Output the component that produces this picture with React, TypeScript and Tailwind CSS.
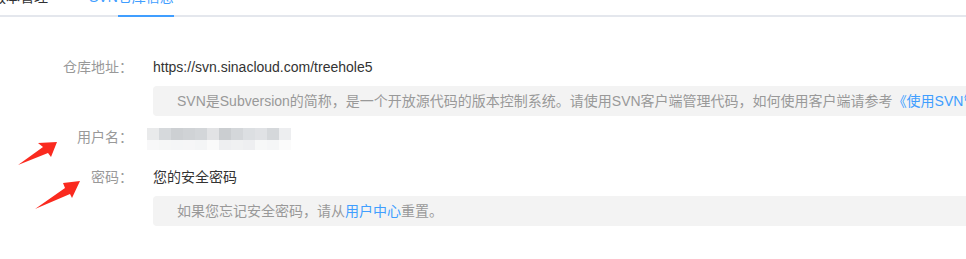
import React from "react";

const topRow = ["#e9eaeb", "#d6d9dc", "#cdd0d3", "#d0d3d6", "#d3d6d9", "#e2e3e5", "#cbced1", "#d4d7da", "#dcdfe2", "#e0e2e5", "#d5d8db", "#edeef0"];
const bottomRow = ["#f8f8f9", "#f6f7f7", "#f5f6f7", "#f6f6f7", "#f4f5f6", "#fafafa", "#eeeff1", "#f0f1f2", "#eeeff1", "#f7f8f8", "#f5f6f7", "#fbfbfb"];

export default function App() {
  return (
    <div className="relative w-[966px] h-[259px] overflow-hidden bg-white font-['Liberation_Sans','Noto_Sans_CJK_SC',sans-serif] text-[14px]">
      {/* Tabs */}
      <div className="relative flex h-[40px] -mt-[23px]">
        <div className="-ml-[8px] pr-[20px] leading-[40px] text-[#303133]">版本管理</div>
        <div className="pl-[21px] leading-[40px] text-[#409eff]">SVN仓库信息</div>
        <div className="absolute left-0 right-0 bottom-0 h-[2px] bg-[#e4e7ed]" />
        <div className="absolute left-[118px] w-[56px] bottom-0 h-[2px] bg-[#409eff]" />
      </div>

      {/* Form */}
      <div className="mt-[40px]">
        <div className="flex h-[20px] leading-[20px]">
          <div className="w-[133px] text-right text-[#999]">仓库地址：</div>
          <div className="ml-[20px] text-[#333]">https://svn.sinacloud.com/treehole5</div>
        </div>
        <div className="ml-[153px] mt-[9px] h-[30px] w-[900px] rounded-[4px] bg-[#f3f3f3] pl-[24px] leading-[30px] whitespace-nowrap text-[#999]">
          SVN是Subversion的简称，是一个开放源代码的版本控制系统。请使用SVN客户端管理代码，如何使用客户端请参考
          <span className="text-[#409eff]">《使用SVN管理代码》</span>
        </div>

        <div className="flex items-start h-[20px] leading-[20px] mt-[11px]">
          <div className="w-[133px] text-right text-[#999]">用户名：</div>
          <div className="ml-[14px] mt-[1px] flex flex-col">
            <div className="flex h-[12px]">
              {topRow.map((c, i) => (
                <div key={i} className="w-[12px] h-full" style={{ backgroundColor: c }} />
              ))}
            </div>
            <div className="flex h-[10px]">
              {bottomRow.map((c, i) => (
                <div key={i} className="w-[12px] h-full" style={{ backgroundColor: c }} />
              ))}
            </div>
          </div>
        </div>

        <div className="flex h-[20px] leading-[20px] mt-[20px]">
          <div className="w-[133px] text-right text-[#999]">密码：</div>
          <div className="ml-[20px] text-[#333]">您的安全密码</div>
        </div>
        <div className="ml-[153px] mt-[9px] h-[30px] w-[900px] rounded-[4px] bg-[#f3f3f3] pl-[24px] leading-[30px] whitespace-nowrap text-[#999]">
          如果您忘记安全密码，请从<span className="text-[#409eff]">用户中心</span>重置。
        </div>
      </div>

      {/* Annotation arrows */}
      <svg className="absolute inset-0 pointer-events-none" width="966" height="259" viewBox="0 0 966 259">
        <polygon points="18,165 43,147 38,143 57,142 51,157 48,153" fill="#fa2a1f" />
        <polygon points="35,209 65,188 63,183 80,181 72,198 70,194" fill="#fa2a1f" />
      </svg>
    </div>
  );
}
